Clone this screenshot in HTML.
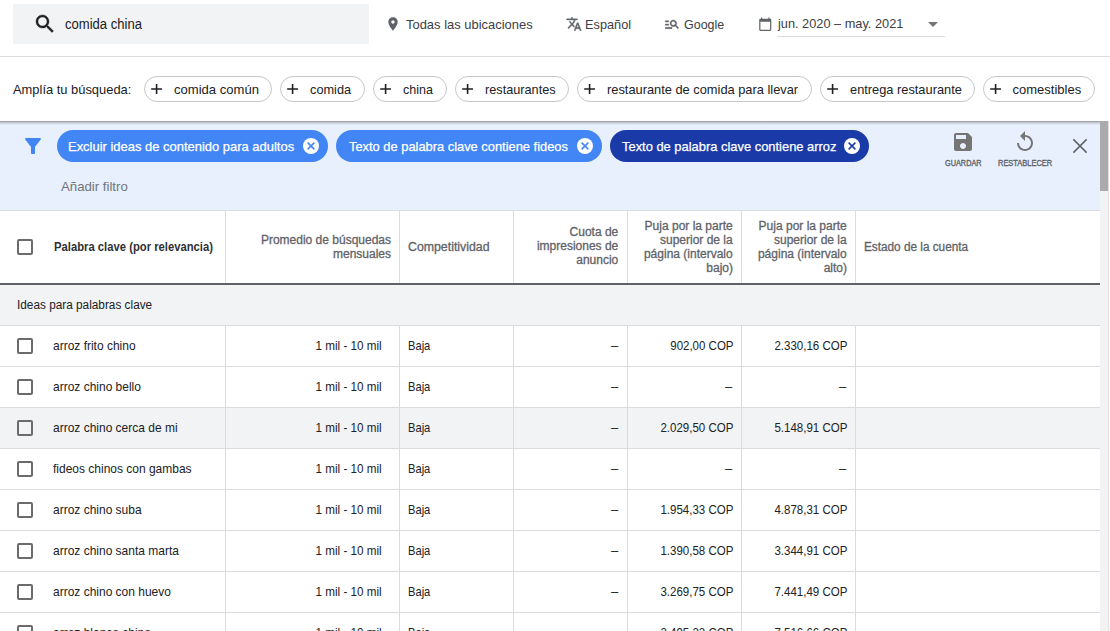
<!DOCTYPE html>
<html><head><meta charset="utf-8"><style>
html,body{margin:0;padding:0;width:1110px;height:631px;overflow:hidden;background:#fff;font-family:"Liberation Sans",sans-serif}
.t{position:absolute;white-space:nowrap}
.ic{position:absolute}
</style></head><body>
<div style="position:absolute;left:0;top:0;width:1110px;height:56px;background:#fff"></div>
<div style="position:absolute;left:0;top:56px;width:1110px;height:1px;background:#dadce0"></div>
<div style="position:absolute;left:13px;top:4px;width:356px;height:40px;background:#f1f3f4"></div>
<svg class="ic" style="left:33px;top:12px;width:24px;height:24px" viewBox="0 0 24 24" fill="#202124" stroke="#202124" stroke-width="0.4"><path d="M15.5 14h-.79l-.28-.27C15.41 12.59 16 11.11 16 9.5 16 5.91 13.09 3 9.5 3S3 5.91 3 9.5 5.91 16 9.5 16c1.61 0 3.09-.59 4.23-1.57l.27.28v.79l5 4.99L20.49 19l-4.99-5zm-6 0C7.01 14 5 11.99 5 9.5S7.01 5 9.5 5 14 7.01 14 9.5 11.99 14 9.5 14z"/></svg>
<svg class="ic" style="left:385px;top:16px;width:16px;height:16px" viewBox="0 0 24 24" fill="#5f6368"><path d="M12 2C8.13 2 5 5.13 5 9c0 5.25 7 13 7 13s7-7.75 7-13c0-3.87-3.13-7-7-7zm0 9.5c-1.38 0-2.5-1.12-2.5-2.5s1.12-2.5 2.5-2.5 2.5 1.12 2.5 2.5-1.12 2.5-2.5 2.5z"/></svg>
<svg class="ic" style="left:565.5px;top:16px;width:16px;height:16px" viewBox="0 0 24 24" fill="#5f6368" stroke="#5f6368" stroke-width="0.5"><path d="M12.87 15.07l-2.54-2.51.03-.03c1.74-1.94 2.98-4.17 3.71-6.53H17V4h-7V2H8v2H1v1.99h11.17C11.5 7.92 10.44 9.75 9 11.35 8.07 10.32 7.3 9.19 6.69 8h-2c.73 1.63 1.73 3.17 2.98 4.560l-5.09 5.02L4 19l5-5 3.110 3.110.76-2.04zM18.5 10h-2L12 22h2l1.12-3h4.75L21 22h2l-4.5-12zm-2.62 7l1.62-4.33L19.12 17h-3.24z"/></svg>
<svg class="ic" style="left:663.5px;top:16px;width:16px;height:16px" viewBox="0 0 24 24" fill="#5f6368" stroke="#5f6368" stroke-width="0.6"><path d="M7 9H2V7h5v2zm0 3H2v2h5v-2zm13.59 7l-3.83-3.83c-.8.52-1.74.83-2.76.83-2.76 0-5-2.24-5-5s2.24-5 5-5 5 2.24 5 5c0 1.02-.31 1.96-.83 2.75L22 17.59 20.59 19zM17 11c0-1.65-1.35-3-3-3s-3 1.35-3 3 1.35 3 3 3 3-1.35 3-3zM2 19h10v-2H2v2z"/></svg>
<svg class="ic" style="left:757.6px;top:16.5px;width:14.5px;height:14.5px" viewBox="0 0 24 24" fill="#5f6368"><path d="M20 3h-1V1h-2v2H7V1H5v2H4c-1.1 0-2 .9-2 2v16c0 1.1.9 2 2 2h16c1.1 0 2-.9 2-2V5c0-1.1-.9-2-2-2zm0 18H4V8h16v13z"/></svg>
<div style="position:absolute;left:777px;top:36px;width:168px;height:1px;background:#dadce0"></div>
<div style="position:absolute;left:928px;top:22px;width:0;height:0;border-left:5px solid transparent;border-right:5px solid transparent;border-top:5px solid #757575"></div>
<div style="position:absolute;left:144.0px;top:76px;width:128.0px;height:26px;box-sizing:border-box;border:1px solid #c4c7cb;border-radius:13px"></div>
<svg class="ic" style="left:150.0px;top:83px;width:12px;height:12px" viewBox="0 0 12 12"><path d="M1.2 6H12M6.6 0.9V11.1" stroke="#202124" stroke-width="1.6"/></svg>
<div style="position:absolute;left:280.0px;top:76px;width:85.0px;height:26px;box-sizing:border-box;border:1px solid #c4c7cb;border-radius:13px"></div>
<svg class="ic" style="left:286.0px;top:83px;width:12px;height:12px" viewBox="0 0 12 12"><path d="M1.2 6H12M6.6 0.9V11.1" stroke="#202124" stroke-width="1.6"/></svg>
<div style="position:absolute;left:373.0px;top:76px;width:74.0px;height:26px;box-sizing:border-box;border:1px solid #c4c7cb;border-radius:13px"></div>
<svg class="ic" style="left:379.0px;top:83px;width:12px;height:12px" viewBox="0 0 12 12"><path d="M1.2 6H12M6.6 0.9V11.1" stroke="#202124" stroke-width="1.6"/></svg>
<div style="position:absolute;left:455.0px;top:76px;width:114.0px;height:26px;box-sizing:border-box;border:1px solid #c4c7cb;border-radius:13px"></div>
<svg class="ic" style="left:461.0px;top:83px;width:12px;height:12px" viewBox="0 0 12 12"><path d="M1.2 6H12M6.6 0.9V11.1" stroke="#202124" stroke-width="1.6"/></svg>
<div style="position:absolute;left:577.0px;top:76px;width:235.0px;height:26px;box-sizing:border-box;border:1px solid #c4c7cb;border-radius:13px"></div>
<svg class="ic" style="left:583.0px;top:83px;width:12px;height:12px" viewBox="0 0 12 12"><path d="M1.2 6H12M6.6 0.9V11.1" stroke="#202124" stroke-width="1.6"/></svg>
<div style="position:absolute;left:820.0px;top:76px;width:155.0px;height:26px;box-sizing:border-box;border:1px solid #c4c7cb;border-radius:13px"></div>
<svg class="ic" style="left:826.0px;top:83px;width:12px;height:12px" viewBox="0 0 12 12"><path d="M1.2 6H12M6.6 0.9V11.1" stroke="#202124" stroke-width="1.6"/></svg>
<div style="position:absolute;left:983.0px;top:76px;width:112.0px;height:26px;box-sizing:border-box;border:1px solid #c4c7cb;border-radius:13px"></div>
<svg class="ic" style="left:989.0px;top:83px;width:12px;height:12px" viewBox="0 0 12 12"><path d="M1.2 6H12M6.6 0.9V11.1" stroke="#202124" stroke-width="1.6"/></svg>
<div style="position:absolute;left:0;top:121px;width:1100px;height:89px;background:#e8f0fe"></div>
<div style="position:absolute;left:0;top:121px;width:1100px;height:4px;background:linear-gradient(#8f9296,#c0c5d0 35%,#e8f0fe)"></div>
<div style="position:absolute;left:0;top:210px;width:1100px;height:1px;background:#dadce0"></div>
<svg class="ic" style="left:21px;top:134px;width:24px;height:24px" viewBox="0 0 24 24" fill="#4285f4"><path d="M4.25 5.61C6.27 8.2 10 13 10 13v6c0 .55.45 1 1 1h2c.55 0 1-.45 1-1v-6s3.72-4.8 5.74-7.39c.51-.66.04-1.61-.79-1.61H5.04c-.83 0-1.3.95-.79 1.61z"/></svg>
<div style="position:absolute;left:57px;top:130px;width:271px;height:32px;border-radius:16px;background:#4285f4"></div>
<svg class="ic" style="left:303.1px;top:138.3px;width:16px;height:16px" viewBox="0 0 16 16"><circle cx="8" cy="8" r="8" fill="#fff"/><path d="M4.6 4.6L11.4 11.4M11.4 4.6L4.6 11.4" stroke="#4285f4" stroke-width="1.5"/></svg>
<div style="position:absolute;left:336px;top:130px;width:266px;height:32px;border-radius:16px;background:#4285f4"></div>
<svg class="ic" style="left:576.9px;top:138.3px;width:16px;height:16px" viewBox="0 0 16 16"><circle cx="8" cy="8" r="8" fill="#fff"/><path d="M4.6 4.6L11.4 11.4M11.4 4.6L4.6 11.4" stroke="#4285f4" stroke-width="1.5"/></svg>
<div style="position:absolute;left:610px;top:130px;width:259px;height:32px;border-radius:16px;background:#1a3aa8"></div>
<svg class="ic" style="left:844.1px;top:138.3px;width:16px;height:16px" viewBox="0 0 16 16"><circle cx="8" cy="8" r="8" fill="#fff"/><path d="M4.6 4.6L11.4 11.4M11.4 4.6L4.6 11.4" stroke="#1a3aa8" stroke-width="1.5"/></svg>
<svg class="ic" style="left:951px;top:130px;width:24px;height:24px" viewBox="0 0 24 24" fill="#757575"><path d="M17 3H5c-1.11 0-2 .9-2 2v14c0 1.1.89 2 2 2h14c1.1 0 2-.9 2-2V7l-4-4zm-5 16c-1.66 0-3-1.340-3-3s1.34-3 3-3 3 1.34 3 3-1.34 3-3 3zm3-10H5V5h10v4z"/></svg>
<svg class="ic" style="left:1013px;top:130px;width:24px;height:24px" viewBox="0 0 24 24" fill="#757575"><path d="M12 5V1L7 6l5 5V7c3.31 0 6 2.69 6 6s-2.69 6-6 6-6-2.69-6-6H4c0 4.42 3.58 8 8 8s8-3.58 8-8-3.58-8-8-8z"/></svg>
<svg class="ic" style="left:1068px;top:134px;width:24px;height:24px" viewBox="0 0 24 24"><path d="M5.4 5.4L18.6 18.6M18.6 5.4L5.4 18.6" stroke="#5f6368" stroke-width="1.5"/></svg>
<div style="position:absolute;left:1100px;top:121px;width:8px;height:510px;background:#f1f3f4"></div>
<div style="position:absolute;left:1100px;top:121px;width:8px;height:70px;background:#ababab"></div>
<div style="position:absolute;left:1108px;top:121px;width:1px;height:510px;background:#e0e0e0"></div>
<div style="position:absolute;left:0;top:283px;width:1100px;height:2px;background:#5f6368"></div>
<div style="position:absolute;left:0;top:285px;width:1100px;height:40px;background:#f1f3f4"></div>
<div style="position:absolute;left:0;top:408px;width:1100px;height:40px;background:#f1f3f4"></div>
<div style="position:absolute;left:0;top:325px;width:1100px;height:1px;background:#dadce0"></div>
<div style="position:absolute;left:0;top:366px;width:1100px;height:1px;background:#dadce0"></div>
<div style="position:absolute;left:0;top:407px;width:1100px;height:1px;background:#dadce0"></div>
<div style="position:absolute;left:0;top:448px;width:1100px;height:1px;background:#dadce0"></div>
<div style="position:absolute;left:0;top:489px;width:1100px;height:1px;background:#dadce0"></div>
<div style="position:absolute;left:0;top:530px;width:1100px;height:1px;background:#dadce0"></div>
<div style="position:absolute;left:0;top:571px;width:1100px;height:1px;background:#dadce0"></div>
<div style="position:absolute;left:0;top:612px;width:1100px;height:1px;background:#dadce0"></div>
<div style="position:absolute;left:225px;top:211px;width:1px;height:72px;background:#dadce0"></div>
<div style="position:absolute;left:225px;top:326px;width:1px;height:305px;background:#dadce0"></div>
<div style="position:absolute;left:399px;top:211px;width:1px;height:72px;background:#dadce0"></div>
<div style="position:absolute;left:399px;top:326px;width:1px;height:305px;background:#dadce0"></div>
<div style="position:absolute;left:513px;top:211px;width:1px;height:72px;background:#dadce0"></div>
<div style="position:absolute;left:513px;top:326px;width:1px;height:305px;background:#dadce0"></div>
<div style="position:absolute;left:627px;top:211px;width:1px;height:72px;background:#dadce0"></div>
<div style="position:absolute;left:627px;top:326px;width:1px;height:305px;background:#dadce0"></div>
<div style="position:absolute;left:741px;top:211px;width:1px;height:72px;background:#dadce0"></div>
<div style="position:absolute;left:741px;top:326px;width:1px;height:305px;background:#dadce0"></div>
<div style="position:absolute;left:855px;top:211px;width:1px;height:72px;background:#dadce0"></div>
<div style="position:absolute;left:855px;top:326px;width:1px;height:305px;background:#dadce0"></div>
<div style="position:absolute;left:17px;top:239px;width:16px;height:16px;box-sizing:border-box;border:2px solid #6b6b6b;border-radius:2px"></div>
<div style="position:absolute;left:17px;top:338px;width:16px;height:16px;box-sizing:border-box;border:2px solid #6b6b6b;border-radius:2px"></div>
<div style="position:absolute;left:17px;top:379px;width:16px;height:16px;box-sizing:border-box;border:2px solid #6b6b6b;border-radius:2px"></div>
<div style="position:absolute;left:17px;top:420px;width:16px;height:16px;box-sizing:border-box;border:2px solid #6b6b6b;border-radius:2px"></div>
<div style="position:absolute;left:17px;top:461px;width:16px;height:16px;box-sizing:border-box;border:2px solid #6b6b6b;border-radius:2px"></div>
<div style="position:absolute;left:17px;top:502px;width:16px;height:16px;box-sizing:border-box;border:2px solid #6b6b6b;border-radius:2px"></div>
<div style="position:absolute;left:17px;top:543px;width:16px;height:16px;box-sizing:border-box;border:2px solid #6b6b6b;border-radius:2px"></div>
<div style="position:absolute;left:17px;top:584px;width:16px;height:16px;box-sizing:border-box;border:2px solid #6b6b6b;border-radius:2px"></div>
<div style="position:absolute;left:17px;top:625px;width:16px;height:16px;box-sizing:border-box;border:2px solid #6b6b6b;border-radius:2px"></div>
<div class="t" style="font-size:14px;line-height:14px;color:#202124;left:65.20px;top:17.05px;transform:scaleX(0.9335);transform-origin:0 0;">comida china</div>
<div class="t" style="font-size:13px;line-height:13px;color:#3c4043;left:405.70px;top:17.70px;transform:scaleX(0.9954);transform-origin:0 0;">Todas las ubicaciones</div>
<div class="t" style="font-size:13px;line-height:13px;color:#3c4043;left:584.82px;top:17.70px;transform:scaleX(0.9807);transform-origin:0 0;">Español</div>
<div class="t" style="font-size:13px;line-height:13px;color:#3c4043;left:684.00px;top:17.70px;transform:scaleX(0.9595);transform-origin:0 0;">Google</div>
<div class="t" style="font-size:13px;line-height:13px;color:#3c4043;left:777.88px;top:17.00px;transform:scaleX(0.9817);transform-origin:0 0;">jun. 2020 – may. 2021</div>
<div class="t" style="font-size:13px;line-height:13px;color:#202124;left:13.30px;top:82.50px;transform:scaleX(0.9921);transform-origin:0 0;">Amplía tu búsqueda:</div>
<div class="t" style="font-size:13px;line-height:13px;color:#202124;left:173.80px;top:82.90px;transform:scaleX(1.0046);transform-origin:0 0;">comida común</div>
<div class="t" style="font-size:13px;line-height:13px;color:#202124;left:309.50px;top:82.90px;transform:scaleX(0.9818);transform-origin:0 0;">comida</div>
<div class="t" style="font-size:13px;line-height:13px;color:#202124;left:402.90px;top:82.90px;transform:scaleX(0.9608);transform-origin:0 0;">china</div>
<div class="t" style="font-size:13px;line-height:13px;color:#202124;left:484.50px;top:82.90px;transform:scaleX(0.9772);transform-origin:0 0;">restaurantes</div>
<div class="t" style="font-size:13px;line-height:13px;color:#202124;left:606.80px;top:82.90px;transform:scaleX(0.9870);transform-origin:0 0;">restaurante de comida para llevar</div>
<div class="t" style="font-size:13px;line-height:13px;color:#202124;left:849.80px;top:82.90px;transform:scaleX(0.9856);transform-origin:0 0;">entrega restaurante</div>
<div class="t" style="font-size:13px;line-height:13px;color:#202124;left:1012.50px;top:82.90px;">comestibles</div>
<div class="t" style="font-size:13px;line-height:13px;color:#ffffff;-webkit-text-stroke:0.25px #ffffff;left:68.40px;top:140.00px;transform:scaleX(0.9964);transform-origin:0 0;">Excluir ideas de contenido para adultos</div>
<div class="t" style="font-size:13px;line-height:13px;color:#ffffff;-webkit-text-stroke:0.25px #ffffff;left:349.00px;top:140.00px;transform:scaleX(0.9899);transform-origin:0 0;">Texto de palabra clave contiene fideos</div>
<div class="t" style="font-size:13px;line-height:13px;color:#ffffff;-webkit-text-stroke:0.25px #ffffff;left:622.00px;top:140.00px;transform:scaleX(0.9927);transform-origin:0 0;">Texto de palabra clave contiene arroz</div>
<div class="t" style="font-size:13px;line-height:13px;color:#70757a;left:61.20px;top:179.80px;transform:scaleX(1.0150);transform-origin:0 0;">Añadir filtro</div>
<div class="t" style="font-size:8.5px;line-height:8.5px;color:#5f6368;-webkit-text-stroke:0.35px #5f6368;left:944.90px;top:158.70px;transform:scaleX(0.8615);transform-origin:0 0;">GUARDAR</div>
<div class="t" style="font-size:8.5px;line-height:8.5px;color:#5f6368;-webkit-text-stroke:0.35px #5f6368;left:997.90px;top:158.70px;transform:scaleX(0.8785);transform-origin:0 0;">RESTABLECER</div>
<div class="t" style="font-size:12px;line-height:12px;color:#303134;font-weight:700;left:53.60px;top:240.84px;transform:scaleX(0.9385);transform-origin:0 0;">Palabra clave (por relevancia)</div>
<div class="t" style="font-size:12px;line-height:12px;color:#5f6368;-webkit-text-stroke:0.3px #5f6368;right:719.00px;top:233.64px;">Promedio de búsquedas</div>
<div class="t" style="font-size:12px;line-height:12px;color:#5f6368;-webkit-text-stroke:0.3px #5f6368;right:719.00px;top:248.24px;">mensuales</div>
<div class="t" style="font-size:12px;line-height:12px;color:#5f6368;-webkit-text-stroke:0.3px #5f6368;left:408.30px;top:240.84px;transform:scaleX(1.0267);transform-origin:0 0;">Competitividad</div>
<div class="t" style="font-size:12px;line-height:12px;color:#5f6368;-webkit-text-stroke:0.3px #5f6368;right:491.73px;top:226.44px;">Cuota de</div>
<div class="t" style="font-size:12px;line-height:12px;color:#5f6368;-webkit-text-stroke:0.3px #5f6368;right:491.73px;top:240.44px;">impresiones de</div>
<div class="t" style="font-size:12px;line-height:12px;color:#5f6368;-webkit-text-stroke:0.3px #5f6368;right:491.73px;top:254.44px;">anuncio</div>
<div class="t" style="font-size:12px;line-height:12px;color:#5f6368;-webkit-text-stroke:0.3px #5f6368;right:377.33px;top:219.84px;">Puja por la parte</div>
<div class="t" style="font-size:12px;line-height:12px;color:#5f6368;-webkit-text-stroke:0.3px #5f6368;right:377.33px;top:233.74px;">superior de la</div>
<div class="t" style="font-size:12px;line-height:12px;color:#5f6368;-webkit-text-stroke:0.3px #5f6368;right:377.33px;top:247.64px;">página (intervalo</div>
<div class="t" style="font-size:12px;line-height:12px;color:#5f6368;-webkit-text-stroke:0.3px #5f6368;right:377.00px;top:261.54px;">bajo)</div>
<div class="t" style="font-size:12px;line-height:12px;color:#5f6368;-webkit-text-stroke:0.3px #5f6368;right:263.33px;top:219.84px;">Puja por la parte</div>
<div class="t" style="font-size:12px;line-height:12px;color:#5f6368;-webkit-text-stroke:0.3px #5f6368;right:263.33px;top:233.74px;">superior de la</div>
<div class="t" style="font-size:12px;line-height:12px;color:#5f6368;-webkit-text-stroke:0.3px #5f6368;right:263.33px;top:247.64px;">página (intervalo</div>
<div class="t" style="font-size:12px;line-height:12px;color:#5f6368;-webkit-text-stroke:0.3px #5f6368;right:263.00px;top:261.54px;">alto)</div>
<div class="t" style="font-size:12px;line-height:12px;color:#5f6368;-webkit-text-stroke:0.3px #5f6368;left:864.40px;top:240.74px;transform:scaleX(0.9812);transform-origin:0 0;">Estado de la cuenta</div>
<div class="t" style="font-size:12px;line-height:12px;color:#202124;left:16.52px;top:298.54px;transform:scaleX(0.9836);transform-origin:0 0;">Ideas para palabras clave</div>
<div class="t" style="font-size:13px;line-height:13px;color:#202124;left:53.20px;top:339.10px;transform:scaleX(0.9220);transform-origin:0 0;">arroz frito chino</div>
<div class="t" style="font-size:13px;line-height:13px;color:#202124;right:728.00px;top:339.10px;transform:scaleX(0.8972);transform-origin:100% 0;">1 mil - 10 mil</div>
<div class="t" style="font-size:13px;line-height:13px;color:#202124;left:407.94px;top:339.10px;transform:scaleX(0.8570);transform-origin:0 0;">Baja</div>
<div class="t" style="font-size:13px;line-height:13px;color:#202124;right:491.77px;top:339.10px;">–</div>
<div class="t" style="font-size:13px;line-height:13px;color:#202124;right:376.41px;top:339.10px;transform:scaleX(0.8850);transform-origin:100% 0;">902,00 COP</div>
<div class="t" style="font-size:13px;line-height:13px;color:#202124;right:262.41px;top:339.10px;transform:scaleX(0.8850);transform-origin:100% 0;">2.330,16 COP</div>
<div class="t" style="font-size:13px;line-height:13px;color:#202124;left:53.20px;top:380.10px;transform:scaleX(0.9220);transform-origin:0 0;">arroz chino bello</div>
<div class="t" style="font-size:13px;line-height:13px;color:#202124;right:728.00px;top:380.10px;transform:scaleX(0.8972);transform-origin:100% 0;">1 mil - 10 mil</div>
<div class="t" style="font-size:13px;line-height:13px;color:#202124;left:407.94px;top:380.10px;transform:scaleX(0.8570);transform-origin:0 0;">Baja</div>
<div class="t" style="font-size:13px;line-height:13px;color:#202124;right:491.77px;top:380.10px;">–</div>
<div class="t" style="font-size:13px;line-height:13px;color:#202124;right:377.77px;top:380.10px;">–</div>
<div class="t" style="font-size:13px;line-height:13px;color:#202124;right:263.77px;top:380.10px;">–</div>
<div class="t" style="font-size:13px;line-height:13px;color:#202124;left:53.20px;top:421.10px;transform:scaleX(0.9220);transform-origin:0 0;">arroz chino cerca de mi</div>
<div class="t" style="font-size:13px;line-height:13px;color:#202124;right:728.00px;top:421.10px;transform:scaleX(0.8972);transform-origin:100% 0;">1 mil - 10 mil</div>
<div class="t" style="font-size:13px;line-height:13px;color:#202124;left:407.94px;top:421.10px;transform:scaleX(0.8570);transform-origin:0 0;">Baja</div>
<div class="t" style="font-size:13px;line-height:13px;color:#202124;right:491.77px;top:421.10px;">–</div>
<div class="t" style="font-size:13px;line-height:13px;color:#202124;right:376.41px;top:421.10px;transform:scaleX(0.8850);transform-origin:100% 0;">2.029,50 COP</div>
<div class="t" style="font-size:13px;line-height:13px;color:#202124;right:262.41px;top:421.10px;transform:scaleX(0.8850);transform-origin:100% 0;">5.148,91 COP</div>
<div class="t" style="font-size:13px;line-height:13px;color:#202124;left:53.20px;top:462.10px;transform:scaleX(0.9220);transform-origin:0 0;">fideos chinos con gambas</div>
<div class="t" style="font-size:13px;line-height:13px;color:#202124;right:728.00px;top:462.10px;transform:scaleX(0.8972);transform-origin:100% 0;">1 mil - 10 mil</div>
<div class="t" style="font-size:13px;line-height:13px;color:#202124;left:407.94px;top:462.10px;transform:scaleX(0.8570);transform-origin:0 0;">Baja</div>
<div class="t" style="font-size:13px;line-height:13px;color:#202124;right:491.77px;top:462.10px;">–</div>
<div class="t" style="font-size:13px;line-height:13px;color:#202124;right:377.77px;top:462.10px;">–</div>
<div class="t" style="font-size:13px;line-height:13px;color:#202124;right:263.77px;top:462.10px;">–</div>
<div class="t" style="font-size:13px;line-height:13px;color:#202124;left:53.20px;top:503.10px;transform:scaleX(0.9220);transform-origin:0 0;">arroz chino suba</div>
<div class="t" style="font-size:13px;line-height:13px;color:#202124;right:728.00px;top:503.10px;transform:scaleX(0.8972);transform-origin:100% 0;">1 mil - 10 mil</div>
<div class="t" style="font-size:13px;line-height:13px;color:#202124;left:407.94px;top:503.10px;transform:scaleX(0.8570);transform-origin:0 0;">Baja</div>
<div class="t" style="font-size:13px;line-height:13px;color:#202124;right:491.77px;top:503.10px;">–</div>
<div class="t" style="font-size:13px;line-height:13px;color:#202124;right:376.41px;top:503.10px;transform:scaleX(0.8850);transform-origin:100% 0;">1.954,33 COP</div>
<div class="t" style="font-size:13px;line-height:13px;color:#202124;right:262.41px;top:503.10px;transform:scaleX(0.8850);transform-origin:100% 0;">4.878,31 COP</div>
<div class="t" style="font-size:13px;line-height:13px;color:#202124;left:53.20px;top:544.10px;transform:scaleX(0.9220);transform-origin:0 0;">arroz chino santa marta</div>
<div class="t" style="font-size:13px;line-height:13px;color:#202124;right:728.00px;top:544.10px;transform:scaleX(0.8972);transform-origin:100% 0;">1 mil - 10 mil</div>
<div class="t" style="font-size:13px;line-height:13px;color:#202124;left:407.94px;top:544.10px;transform:scaleX(0.8570);transform-origin:0 0;">Baja</div>
<div class="t" style="font-size:13px;line-height:13px;color:#202124;right:491.77px;top:544.10px;">–</div>
<div class="t" style="font-size:13px;line-height:13px;color:#202124;right:376.41px;top:544.10px;transform:scaleX(0.8850);transform-origin:100% 0;">1.390,58 COP</div>
<div class="t" style="font-size:13px;line-height:13px;color:#202124;right:262.41px;top:544.10px;transform:scaleX(0.8850);transform-origin:100% 0;">3.344,91 COP</div>
<div class="t" style="font-size:13px;line-height:13px;color:#202124;left:53.20px;top:585.10px;transform:scaleX(0.9220);transform-origin:0 0;">arroz chino con huevo</div>
<div class="t" style="font-size:13px;line-height:13px;color:#202124;right:728.00px;top:585.10px;transform:scaleX(0.8972);transform-origin:100% 0;">1 mil - 10 mil</div>
<div class="t" style="font-size:13px;line-height:13px;color:#202124;left:407.94px;top:585.10px;transform:scaleX(0.8570);transform-origin:0 0;">Baja</div>
<div class="t" style="font-size:13px;line-height:13px;color:#202124;right:491.77px;top:585.10px;">–</div>
<div class="t" style="font-size:13px;line-height:13px;color:#202124;right:376.41px;top:585.10px;transform:scaleX(0.8850);transform-origin:100% 0;">3.269,75 COP</div>
<div class="t" style="font-size:13px;line-height:13px;color:#202124;right:262.41px;top:585.10px;transform:scaleX(0.8850);transform-origin:100% 0;">7.441,49 COP</div>
<div class="t" style="font-size:13px;line-height:13px;color:#202124;left:53.20px;top:626.10px;transform:scaleX(0.9220);transform-origin:0 0;">arroz blanco chino</div>
<div class="t" style="font-size:13px;line-height:13px;color:#202124;right:728.00px;top:626.10px;transform:scaleX(0.8972);transform-origin:100% 0;">1 mil - 10 mil</div>
<div class="t" style="font-size:13px;line-height:13px;color:#202124;left:407.94px;top:626.10px;transform:scaleX(0.8570);transform-origin:0 0;">Baja</div>
<div class="t" style="font-size:13px;line-height:13px;color:#202124;right:491.77px;top:626.10px;">–</div>
<div class="t" style="font-size:13px;line-height:13px;color:#202124;right:376.41px;top:626.10px;transform:scaleX(0.8850);transform-origin:100% 0;">3.495,33 COP</div>
<div class="t" style="font-size:13px;line-height:13px;color:#202124;right:262.41px;top:626.10px;transform:scaleX(0.8850);transform-origin:100% 0;">7.516,66 COP</div>
</body></html>
